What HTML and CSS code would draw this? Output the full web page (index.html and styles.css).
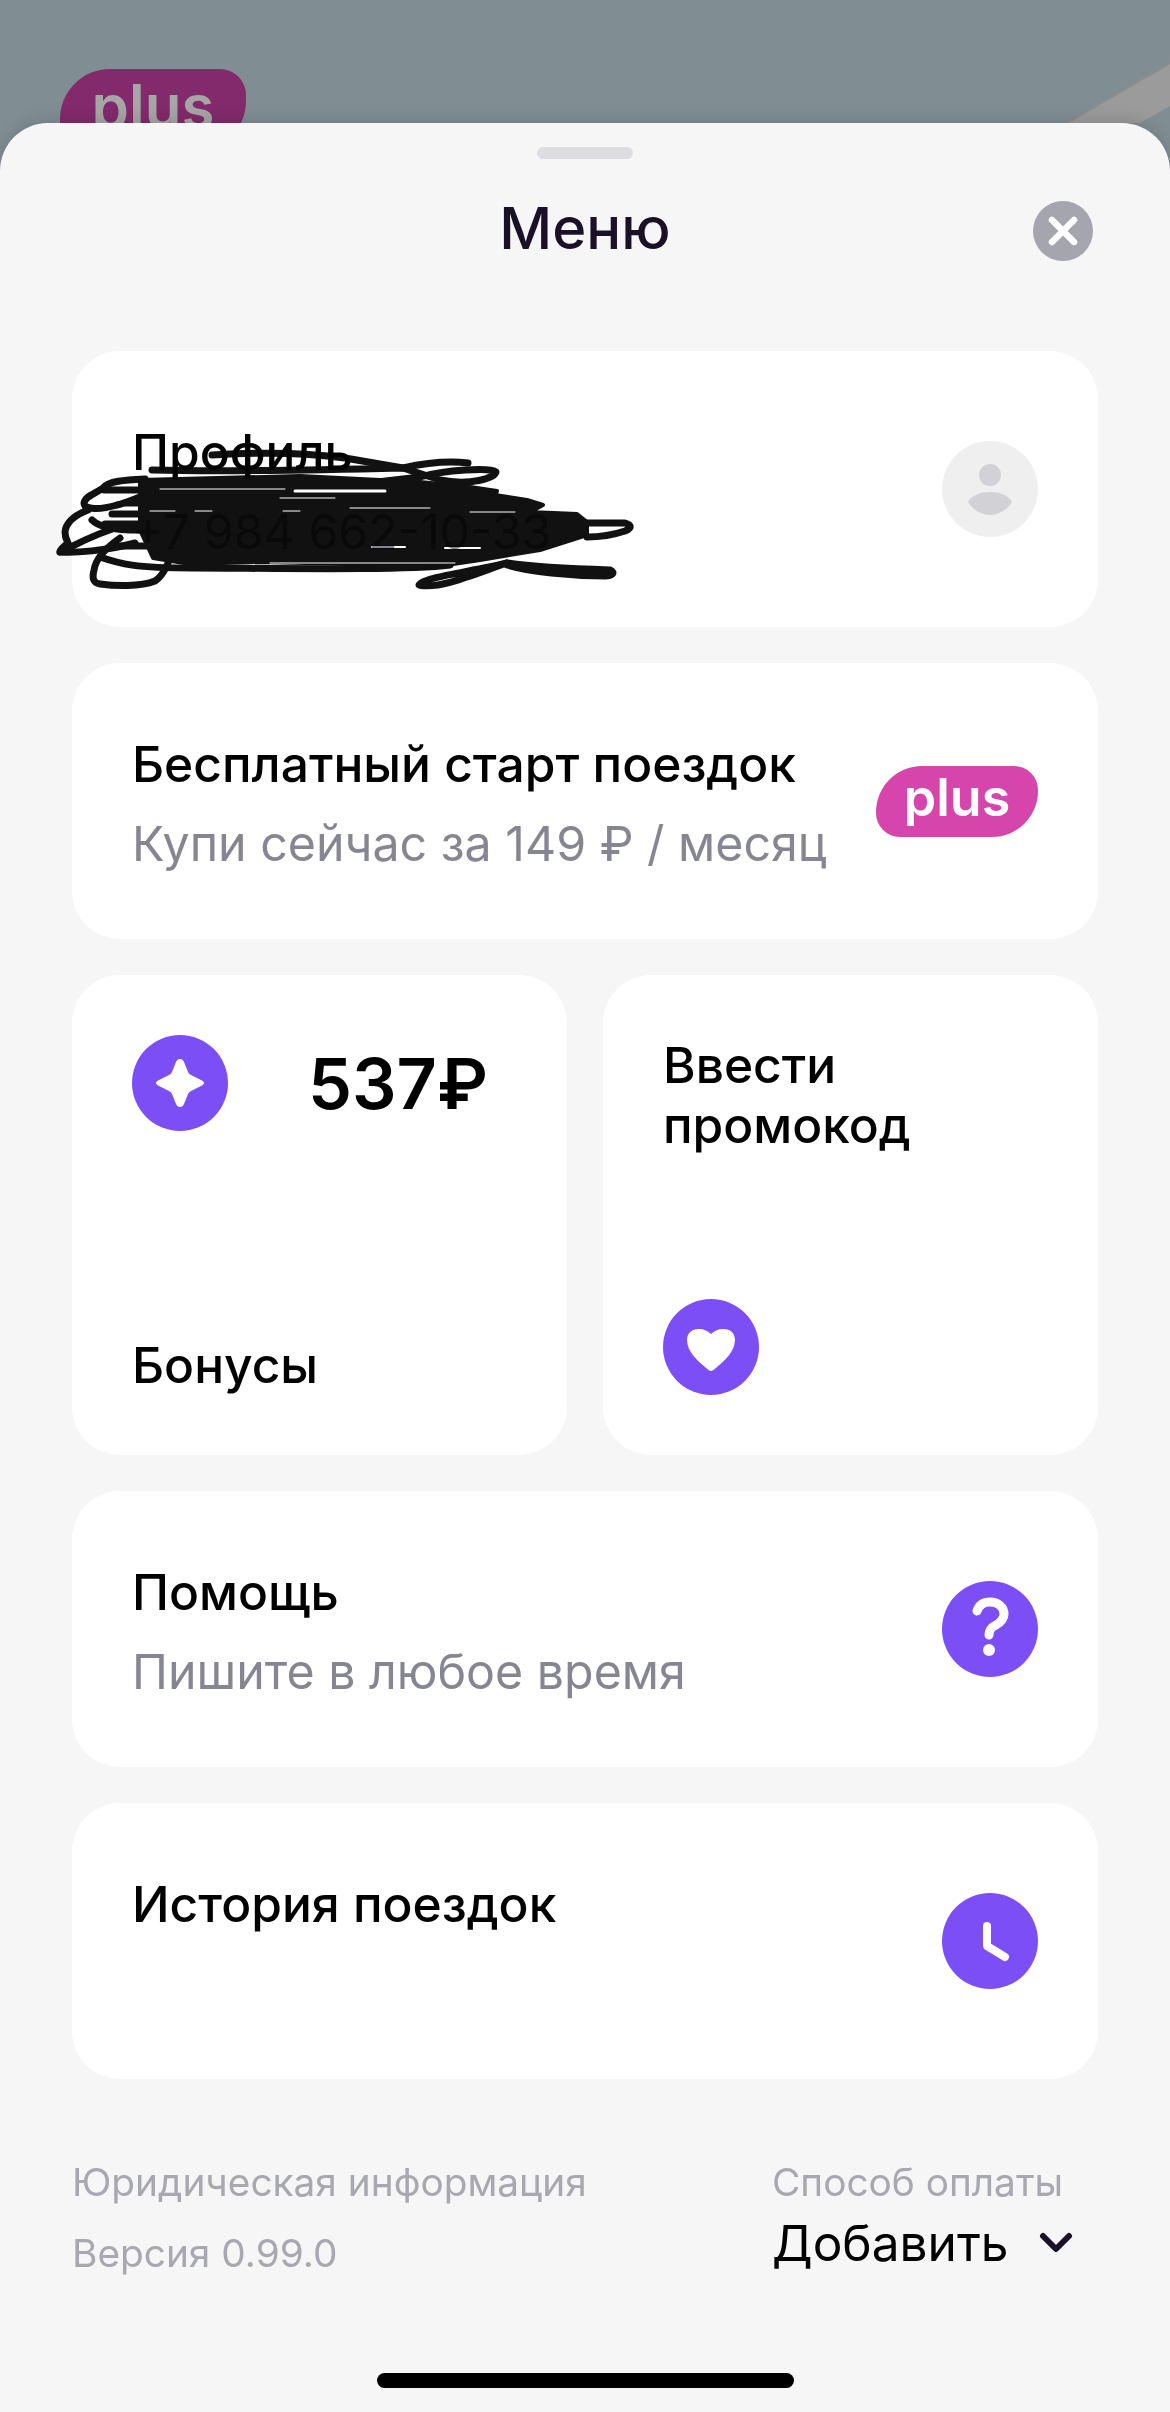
FILE: index.html
```html
<!doctype html>
<html lang="ru">
<head>
<title>Меню</title>
<meta charset="utf-8">
<link rel="stylesheet" href="styles.css">
</head>
<body>
<div class="backdrop">
    <div class="map-badge">plus</div>
    <svg class="map-road" width="103" height="60" viewBox="0 0 103 60"><polygon points="0,60 103,0 103,43 73,60" fill="#9b9b9b"/><path d="M0 60 103 0" stroke="#8c8c8c" stroke-width="2"/></svg>
</div>
<main class="sheet">
    <div class="handle"></div>
    <header class="sheet-head">
        <h1>Меню</h1>
        <button class="close">
            <svg width="60" height="60" viewBox="0 0 60 60"><circle cx="30" cy="30" r="30" fill="#a5a5ae"/><path d="M19 19 41 41M41 19 19 41" stroke="#fff" stroke-width="6.500" stroke-linecap="round"/></svg>
        </button>
    </header>

    <section class="card row profile">
        <div class="text">
            <div class="title">Профиль</div>
            <div class="sub">+7 984 662-10-33</div>
        </div>
        <svg class="icon" viewBox="0 0 96 96"><circle cx="48" cy="48" r="48" fill="#efeff0"/><circle cx="48" cy="34" r="11" fill="#d1d1d6"/><path d="M26 61C30 54 39 51 48 51S66 54 70 61C66 68 57 74 48 74S30 68 26 61Z" fill="#d1d1d6"/></svg>
        <!-- scribble drawn over the phone number, coordinates are page pixels -->
        <svg class="scribble" width="600" height="170" viewBox="50 430 600 170" fill="none" stroke="#111" stroke-width="7" stroke-linecap="round" stroke-linejoin="round">
            <path d="M140 480 300 476 420 482 470 487 497 491 495 495 527 500 543 505 530 512 577 514 587 522 587 535 540 550 480 560 440 566 260 562 190 564 153 558 140 530Z" fill="#111" stroke-width="4"/>
            <path d="M212 455C260 452 310 453 345 458L403 468C430 462 450 461 468 463"/>
            <path d="M152 470C230 472 320 470 403 468L440 480C470 486 495 478 496 472C490 467 445 470 420 477L360 484"/>
            <path d="M145 479C125 480 108 481 103 488C95 494 85 496 84 503C84 510 100 510 117 505C125 503 132 500 140 497"/>
            <path d="M104 490H145M125 503H145M112 514H145M105 524H145M120 546H160"/>
            <path d="M88 510C75 515 66 522 65 532C65 538 67 541 68 543C64 547 60 549 60 552C70 548 90 535 125 525"/>
            <path d="M60 552C75 553 105 551 135 543"/>
            <path d="M92 520C98 526 110 530 140 530"/>
            <path d="M120 538C110 545 96 556 94 570C92 578 93 583 100 584C115 586 140 587 155 581C163 576 168 565 172 552"/>
            <path d="M100 557C120 564 135 568 193 568C260 568 400 571 450 565"/>
            <path d="M577 523H625C632 525 632 528 625 531C610 536 600 537 587 537"/>
            <path d="M507 563C540 568 575 569 610 570C616 573 612 576 605 576C570 576 530 572 507 565" fill="#111"/>
            <path d="M507 563C470 572 420 578 419 585C440 590 480 572 507 563"/>
            <g stroke="#fff" stroke-width="1">
                <path d="M160 489H285"/>
                <path d="M295 491H385" stroke-width="3"/>
                <path d="M280 498H335M350 508H430M470 512H515"/>
                <path d="M150 511H175M195 511H212M283 511H300"/>
                <path d="M372 547H405M445 548H480" stroke-width="2"/>
                <path d="M270 563H455"/>
            </g>
        </svg>
    </section>

    <section class="card row">
        <div class="text">
            <div class="title">Бесплатный старт поездок</div>
            <div class="sub">Купи сейчас за 149 ₽ / месяц</div>
        </div>
        <div class="plus">plus</div>
    </section>

    <div class="pair">
        <section class="card tile">
            <div class="bonus-top">
                <svg class="icon" viewBox="0 0 96 96"><circle cx="48" cy="48" r="48" fill="#7b4ff5"/><path d="M48 24C50 24 51 25 52 27L56 37C57 39 58 39.500 60 40.500L69 45C71 46 72 47 72 48S71 50 69 51L60 55.500C58 56.500 57 57 56 59L52 69C51 71 50 72 48 72S45 71 44 69L40 59C39 57 38 56.500 36 55.500L27 51C25 50 24 49 24 48S25 46 27 45L36 40.500C38 39.500 39 39 40 37L44 27C45 25 46 24 48 24Z" fill="#fff"/></svg>
                <div class="amount">537₽</div>
            </div>
            <div class="title">Бонусы</div>
        </section>
        <section class="card tile">
            <div class="title">Ввести<br>промокод</div>
            <svg class="icon" viewBox="0 0 96 96"><circle cx="48" cy="48" r="48" fill="#7b4ff5"/><path d="M48 72C46.500 72 45.500 71 44 69.800C35 62 24 53 24 41C24 33 30 30 36 30C41 30 45 32 48 35C51 32 55 30 60 30C66 30 72 33 72 41C72 53 61 62 52 69.800C50.500 71 49.500 72 48 72Z" fill="#fff"/></svg>
        </section>
    </div>

    <section class="card row">
        <div class="text">
            <div class="title">Помощь</div>
            <div class="sub">Пишите в любое время</div>
        </div>
        <svg class="icon" viewBox="0 0 96 96"><circle cx="48" cy="48" r="48" fill="#7b4ff5"/><path d="M35 30C37 24 42 21 48 21C56 21 62 26 62 33C62 38 59 41 54 44C50 46 47 48 47 54" fill="none" stroke="#fff" stroke-width="9" stroke-linecap="round"/><circle cx="47" cy="69" r="6" fill="#fff"/></svg>
    </section>

    <section class="card row">
        <div class="text">
            <div class="title">История поездок</div>
        </div>
        <svg class="icon" viewBox="0 0 96 96"><circle cx="48" cy="48" r="48" fill="#7b4ff5"/><path d="M45 33V53L63 64" fill="none" stroke="#fff" stroke-width="8" stroke-linecap="round" stroke-linejoin="round"/></svg>
    </section>

    <footer class="foot">
        <div class="legal">
            <div>Юридическая информация</div>
            <div>Версия 0.99.0</div>
        </div>
        <div class="pay">
            <div class="pay-label">Способ оплаты</div>
            <div class="pay-value">Добавить
                <svg width="34" height="22" viewBox="0 0 34 22"><path d="M4 4 17 17 30 4" fill="none" stroke="#1a1128" stroke-width="6" stroke-linecap="round" stroke-linejoin="round"/></svg>
            </div>
        </div>
    </footer>
    <div class="home-bar"></div>
</main>
</body>
</html>
```

FILE: styles.css
```css
*{
    margin: 0;
    padding: 0;
    box-sizing: border-box;
}
body{
    width: 1170px;
    height: 2412px;
    overflow: hidden;
    background: #808e94;
    font-family: "Inter", "Liberation Sans", sans-serif;
    color: #000;
}
.backdrop{
    position: relative;
    height: 123px;
    overflow: hidden;
}
.map-badge{
    position: absolute;
    left: 60px;
    top: 69px;
    width: 186px;
    height: 82px;
    border-radius: 50px 26px 50px 26px;
    background: #832a6c;
    color: #a6a6a6;
    font-size: 60px;
    font-weight: 600;
    line-height: 74px;
    text-align: center;
}
.map-road{
    position: absolute;
    left: 1067px;
    top: 63px;
}
.sheet{
    position: relative;
    height: 2289px;
    padding: 24px 72px 0;
    background: #f6f6f6;
    border-radius: 48px 48px 0 0;
    box-shadow: 0 -4px 16px rgba(0,0,0,0.12);
}
.handle{
    width: 96px;
    height: 12px;
    margin: 0 auto;
    border-radius: 6px;
    background: #dddde1;
}
.sheet-head{
    position: relative;
    height: 192px;
    padding-top: 35px;
    text-align: center;
}
.sheet-head h1{
    font-size: 58px;
    font-weight: 500;
    line-height: 68px;
    color: #1a1128;
}
.close{
    position: absolute;
    right: 5px;
    top: 42px;
    width: 60px;
    height: 60px;
    border: 0;
    background: none;
}
.card{
    position: relative;
    background: #fff;
    border-radius: 48px;
    margin-bottom: 36px;
}
.row{
    display: flex;
    align-items: center;
    justify-content: space-between;
    height: 276px;
    padding: 60px;
}
.row .text{
    align-self: flex-start;
    margin-top: 11px;
}
.title{
    font-size: 49.700px;
    font-weight: 450;
    line-height: 60px;
}
.sub{
    margin-top: 20px;
    font-size: 48.300px;
    line-height: 60px;
    color: #868692;
}
.icon{
    display: block;
    flex: none;
    width: 96px;
    height: 96px;
}
.plus{
    width: 162px;
    height: 71px;
    border-radius: 46px 24px 46px 24px;
    background: #d545ab;
    color: #fff;
    font-size: 52px;
    font-weight: 600;
    line-height: 64px;
    text-align: center;
}
.scribble{
    position: absolute;
    left: -22px;
    top: 79px;
    mix-blend-mode: multiply;
}
.pair{
    display: grid;
    grid-template-columns: 1fr 1fr;
    gap: 36px;
    margin-bottom: 36px;
}
.pair .card{
    margin: 0;
}
.tile{
    display: flex;
    flex-direction: column;
    justify-content: space-between;
    height: 480px;
    padding: 60px;
}
.bonus-top{
    display: flex;
    align-items: center;
    gap: 80px;
}
.amount{
    font-size: 70px;
    font-weight: 600;
}
.foot{
    display: flex;
    justify-content: space-between;
    margin-top: 81px;
    padding-right: 25px;
    color: #a8a8b0;
    font-size: 38.800px;
}
.legal div{
    line-height: 44px;
    margin-bottom: 27px;
}
.pay{
    width: 301px;
}
.pay-label{
    line-height: 44px;
}
.pay-value{
    display: flex;
    align-items: center;
    justify-content: space-between;
    margin-top: 9px;
    color: #000;
    font-size: 49.600px;
    line-height: 60px;
}
.home-bar{
    position: absolute;
    left: 377px;
    bottom: 24px;
    width: 417px;
    height: 15px;
    border-radius: 8px;
    background: #000;
}
```
